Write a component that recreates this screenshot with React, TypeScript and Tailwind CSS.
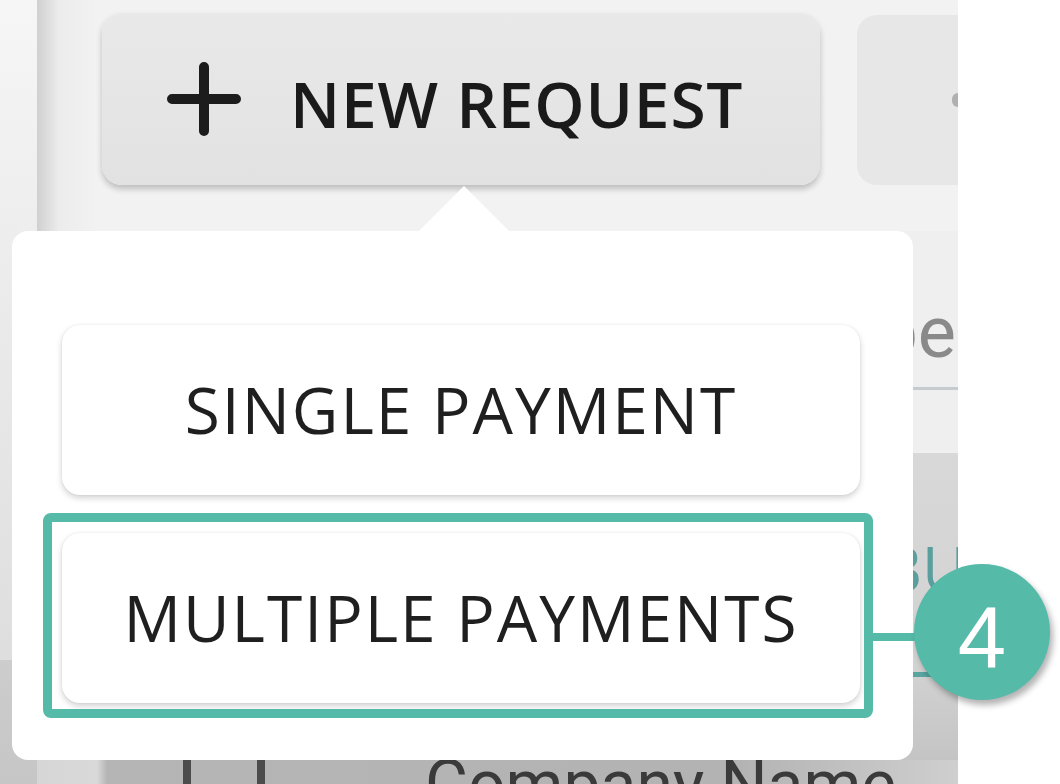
function MenuButton({ label }: { label: string }) {
  return (
    <button className="w-[798px] h-[170px] shrink-0 rounded-[18px] bg-white shadow-[0_3px_6px_rgba(0,0,0,0.18),0_0_2px_rgba(0,0,0,0.08)] flex items-center justify-center text-[64px] font-medium tracking-[2px] text-[#1f1f1f]">
      {label}
    </button>
  );
}

function PlusIcon() {
  return (
    <svg width="74" height="74" viewBox="0 0 74 74" className="shrink-0">
      <path d="M37 5v64M5 37h64" stroke="#1c1c1c" strokeWidth="10" strokeLinecap="round" />
    </svg>
  );
}

export default function App() {
  return (
    <div className="relative w-[1060px] h-[784px] overflow-hidden bg-white font-['Open_Sans',sans-serif]">
      {/* dimmed page behind the menu */}
      <div className="flex w-[958px] h-full">
        <aside className="w-[37px] h-full flex flex-col">
          <div className="flex-1 bg-gradient-to-b from-[#f6f6f6] to-[#dedede]" />
          <div className="h-[124px] bg-gradient-to-b from-[#cdcdcd] to-[#c6c6c6]" />
        </aside>

        <main className="flex-1 min-w-0 flex flex-col overflow-hidden">
          <div className="h-[231px] shrink-0 flex gap-[37px] pl-[65px] pt-[13px] bg-[linear-gradient(90deg,#d0d0d0_0px,#ececec_22px,#f2f2f2_60px)]">
            <button className="w-[718px] h-[172px] shrink-0 rounded-[20px] bg-gradient-to-b from-[#e9e9e9] to-[#e2e2e2] shadow-[0_4px_6px_rgba(0,0,0,0.22)] flex items-center pl-[65px] gap-[49px] text-[#1a1a1a]">
              <PlusIcon />
              <span className="text-[64px] font-semibold tracking-[0.8px] pt-[10px]">NEW REQUEST</span>
            </button>
            <div className="flex-1 h-[170px] mt-[2px] rounded-l-[20px] bg-[#e7e7e7] flex items-center justify-end">
              <span className="w-[6px] h-[14px] rounded-l-full bg-[#b0b0b0]" />
            </div>
          </div>

          <div className="h-[222px] shrink-0 flex flex-col items-end bg-[#efefef]">
            <span className="mt-[66px] mr-[2px] text-[72px] leading-none text-[#8a8a8a] font-['Roboto',sans-serif]">Type</span>
            <div className="mt-[18px] w-[400px] h-[3px] bg-[#c6cbd0]" />
          </div>

          <div className="h-[307px] shrink-0 overflow-hidden flex flex-col items-start bg-[linear-gradient(180deg,#d8d8d8,#d2d2d2_70%,#c4c4c4)]">
            <span className="mt-[84px] ml-[845px] text-[62px] leading-none text-[#5a9e9e] whitespace-nowrap">BULK</span>
            <div className="mt-[73px] ml-[870px] w-[80px] h-[5px] bg-[#5aa5a0]" />
          </div>

          <div className="flex-1 min-h-0 overflow-hidden flex items-start bg-[linear-gradient(90deg,#d6d6d6_0px,#d9d9d9_60px,#b5b5b5_70px,#b3b3b3_700px,#cfcfcf)]">
            <div className="ml-[146px] -mt-[30px] shrink-0 w-[82px] h-[82px] border-[8px] border-[#4c4c4c] rounded-[4px]" />
            <span className="ml-[160px] -mt-[8px] text-[66px] leading-none text-[#3a3a3a] font-['Roboto',sans-serif] whitespace-nowrap">Company Name</span>
          </div>
        </main>
      </div>

      {/* popup arrow */}
      <div className="absolute left-[418px] top-[186px] w-0 h-0 border-l-[46px] border-r-[46px] border-b-[46px] border-l-transparent border-r-transparent border-b-white" />

      {/* dropdown menu */}
      <div className="absolute left-[12px] top-[231px] w-[901px] h-[529px] rounded-[16px] bg-white flex flex-col pl-[50px] pt-[94px] gap-[38px]">
        <MenuButton label="SINGLE PAYMENT" />
        <MenuButton label="MULTIPLE PAYMENTS" />
      </div>

      {/* annotation */}
      <div className="absolute left-[43px] top-[513px] w-[830px] h-[205px] border-[9px] border-[#55baa8] rounded-[8px]" />
      <div className="absolute left-[872px] top-[633px] w-[44px] h-[8px] bg-[#55baa8]" />
      <div className="absolute left-[914px] top-[564px] w-[136px] h-[136px] rounded-full bg-[#55baa8] shadow-[3px_5px_6px_rgba(0,0,0,0.3)] flex items-center justify-center">
        <span className="text-[87px] leading-none text-white font-['Liberation_Sans',sans-serif] pt-[10px]">4</span>
      </div>
    </div>
  );
}
